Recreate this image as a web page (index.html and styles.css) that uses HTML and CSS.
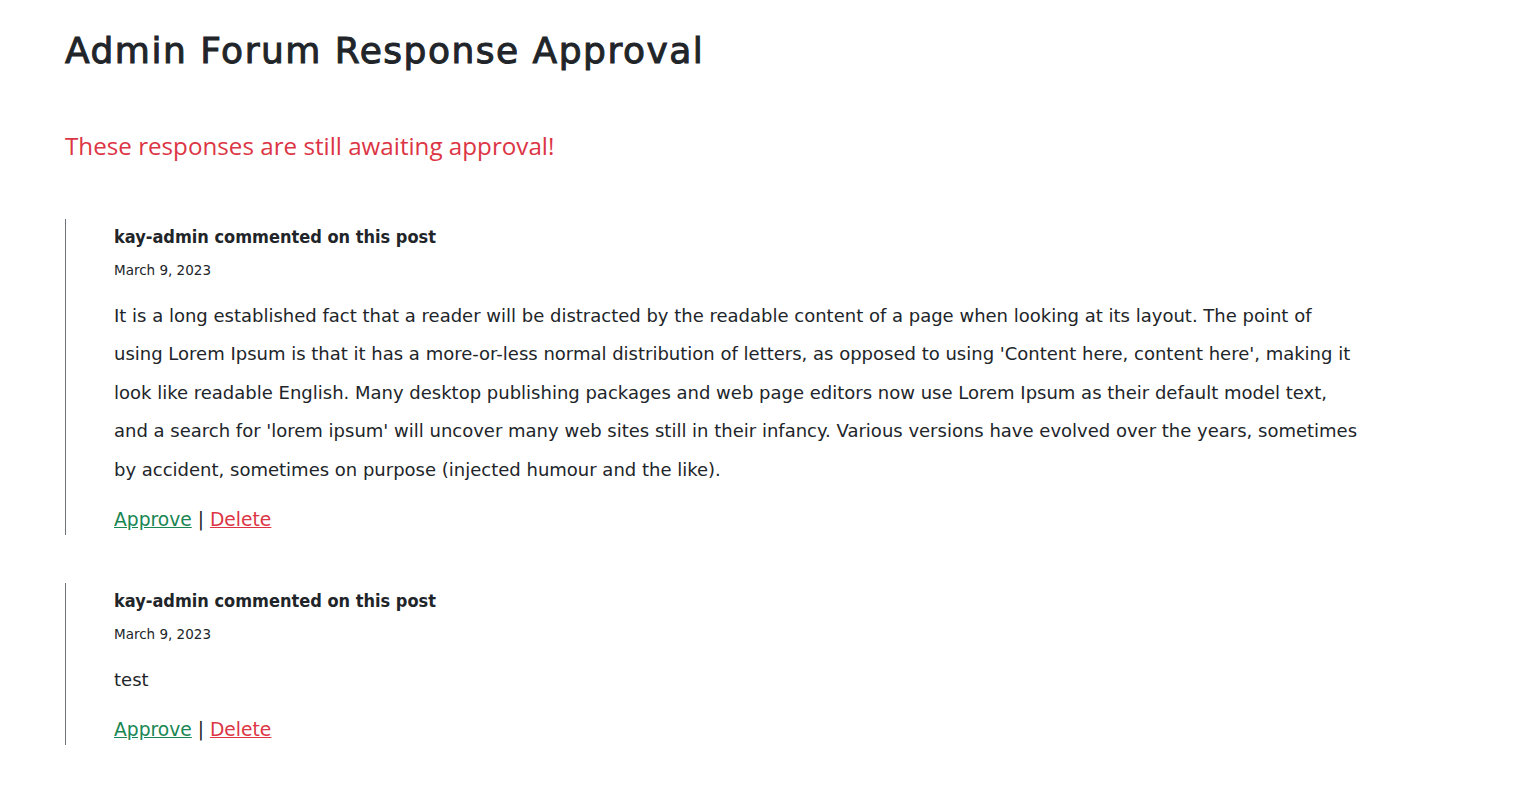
FILE: index.html
```html
<!DOCTYPE html>
<html lang="en">
<head>
<meta charset="utf-8">
<title>Admin Forum Response Approval</title>
<link rel="stylesheet" href="styles.css">
</head>
<body>
<main class="page">
  <h1 class="page-title">Admin Forum Response Approval</h1>
  <p class="notice">These responses are still awaiting approval!</p>
  <section class="responses">
    <article class="response">
      <h5 class="response-author">kay-admin commented on this post</h5>
      <div class="response-date">March 9, 2023</div>
      <p class="response-body">It is a long established fact that a reader will be distracted by the readable content of a page when looking at its layout. The point of using Lorem Ipsum is that it has a more-or-less normal distribution of letters, as opposed to using 'Content here, content here', making it look like readable English. Many desktop publishing packages and web page editors now use Lorem Ipsum as their default model text, and a search for 'lorem ipsum' will uncover many web sites still in their infancy. Various versions have evolved over the years, sometimes by accident, sometimes on purpose (injected humour and the like).</p>
      <div class="response-actions"><a href="#" class="link-approve">Approve</a> | <a href="#" class="link-delete">Delete</a></div>
    </article>
    <article class="response">
      <h5 class="response-author">kay-admin commented on this post</h5>
      <div class="response-date">March 9, 2023</div>
      <p class="response-body">test</p>
      <div class="response-actions"><a href="#" class="link-approve">Approve</a> | <a href="#" class="link-delete">Delete</a></div>
    </article>
  </section>
</main>
</body>
</html>
```
FILE: styles.css
```css
html, body {
  margin: 0;
  padding: 0;
  background: #ffffff;
}

body {
  font-family: "DejaVu Sans", "Liberation Sans", sans-serif;
  color: #212529;
}

.page {
  padding: 27px 65px 40px 65px;
}

.page-title {
  margin: 0;
  font-size: 36px;
  line-height: 48px;
  font-weight: 400;
  letter-spacing: 1.5px;
  -webkit-text-stroke: 1px #212529;
  color: #212529;
}

.notice {
  margin: 53px 0 0 0;
  font-family: "Open Sans", "Noto Sans", sans-serif;
  font-size: 24.2px;
  line-height: 36px;
  color: #dc3545;
}

.responses {
  margin-top: 55px;
  display: flex;
  flex-direction: column;
  gap: 48px;
}

.response {
  border-left: 1px solid #6c757d;
  padding-left: 48px;
}

.response-author {
  margin: 0;
  font-family: "DejaVu Sans Condensed", "DejaVu Sans", sans-serif;
  font-size: 18px;
  line-height: 36px;
  font-weight: 700;
}

.response-date {
  font-size: 13.5px;
  line-height: 30px;
}

.response-body {
  margin: 12px 0 0 0;
  font-size: 18px;
  line-height: 38.4px;
  max-width: 1250px;
}

.response-actions {
  margin-top: 16px;
  font-size: 18.7px;
  line-height: 30px;
}

.link-approve {
  color: #198754;
}

.link-delete {
  color: #dc3545;
}
```
